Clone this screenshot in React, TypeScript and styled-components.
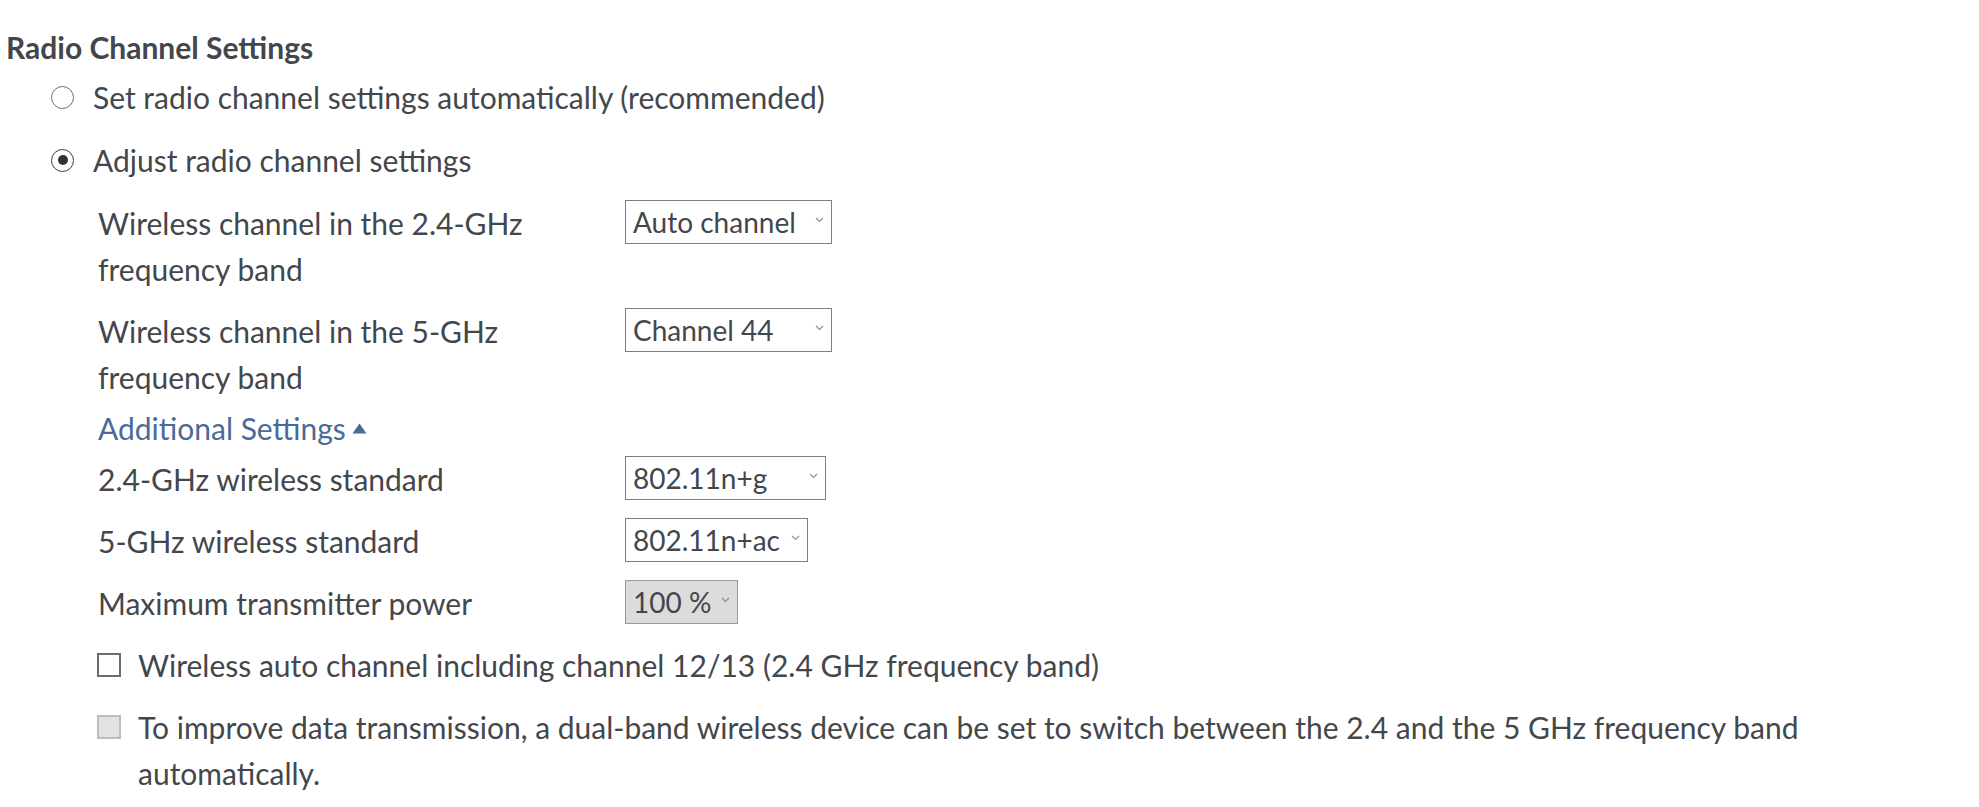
import React from 'react';
import styled, { createGlobalStyle } from 'styled-components';

const GlobalStyle = createGlobalStyle`
  html, body {
    margin: 0;
    padding: 0;
    background: #ffffff;
  }
  body {
    font-family: 'Lato', 'Open Sans', sans-serif;
    color: #43474c;
  }
`;

interface ISelectProps {
  value: string;
  width: number;
  disabled?: boolean;
}

const Select: React.FC<ISelectProps> = ({ value, width, disabled }) => {
  return (
    <SelectBox $width={width} $disabled={disabled}>
      <SelectValue>{value}</SelectValue>
      <Chevron width="9" height="6" viewBox="0 0 9 6">
        <path d="M1 1 L4.5 4.5 L8 1" fill="none" stroke="#8a8d91" strokeWidth="1.1" />
      </Chevron>
    </SelectBox>
  );
};

interface IRowProps {
  label: React.ReactNode;
  children: React.ReactNode;
}

const SettingRow: React.FC<IRowProps> = ({ label, children }) => (
  <Row>
    <RowLabel>{label}</RowLabel>
    <div>{children}</div>
  </Row>
);

const App: React.FC = () => {
  return (
    <>
      <GlobalStyle />
      <Page>
        <Heading>Radio Channel Settings</Heading>
        <RadioList>
          <RadioRow>
            <RadioCircle />
            <span>Set radio channel settings automatically (recommended)</span>
          </RadioRow>
          <RadioRow>
            <RadioCircle checked />
            <span>Adjust radio channel settings</span>
          </RadioRow>
        </RadioList>
        <Settings>
          <SettingRow label="Wireless channel in the 2.4-GHz frequency band">
            <Select value="Auto channel" width={207} />
          </SettingRow>
          <SettingRow label="Wireless channel in the 5-GHz frequency band">
            <Select value="Channel 44" width={207} />
          </SettingRow>
          <MoreLink>
            Additional Settings
            <svg width="15" height="11" viewBox="0 0 15 11">
              <path d="M7.5 0.5 L14.5 10.5 L0.5 10.5 Z" fill="#4a6a9a" />
            </svg>
          </MoreLink>
          <SettingRow label="2.4-GHz wireless standard">
            <Select value="802.11n+g" width={201} />
          </SettingRow>
          <SettingRow label="5-GHz wireless standard">
            <Select value="802.11n+ac" width={183} />
          </SettingRow>
          <SettingRow label="Maximum transmitter power">
            <Select value="100 %" width={113} disabled />
          </SettingRow>
          <CheckRow>
            <CheckBox />
            <CheckText>Wireless auto channel including channel 12/13 (2.4 GHz frequency band)</CheckText>
          </CheckRow>
          <CheckRow>
            <CheckBox disabled />
            <CheckText>
              To improve data transmission, a dual-band wireless device can be set to switch between the 2.4 and the 5 GHz
              frequency band automatically.
            </CheckText>
          </CheckRow>
        </Settings>
      </Page>
    </>
  );
};

export default App;

const Page = styled.div`
  padding: 24px 0 0 6px;
  font-size: 30px;
  line-height: 46px;
`;

const Heading = styled.div`
  font-weight: 700;
  margin-bottom: 4px;
`;

const RadioList = styled.div`
  display: flex;
  flex-direction: column;
  gap: 17px;
  padding-left: 45px;
`;

const RadioRow = styled.label`
  display: flex;
  align-items: center;
  gap: 19px;
`;

const RadioCircle = styled.span<{ checked?: boolean }>`
  box-sizing: border-box;
  width: 23px;
  height: 23px;
  border-radius: 50%;
  border: 1.6px solid ${({ checked }) => (checked ? '#3a3d41' : '#6a6d71')};
  display: flex;
  align-items: center;
  justify-content: center;
  flex-shrink: 0;

  &::after {
    content: '';
    display: ${({ checked }) => (checked ? 'block' : 'none')};
    width: 10px;
    height: 10px;
    border-radius: 50%;
    background: #2e3135;
  }
`;

const Settings = styled.div`
  display: flex;
  flex-direction: column;
  gap: 16px;
  padding: 17px 0 0 92px;
`;

const Row = styled.div`
  display: grid;
  grid-template-columns: 527px auto;
  align-items: start;
`;

const RowLabel = styled.div`
  max-width: 450px;
`;

const SelectBox = styled.div<{ $width: number; $disabled?: boolean }>`
  box-sizing: border-box;
  width: ${({ $width }) => $width}px;
  height: 44px;
  border: 1px solid ${({ $disabled }) => ($disabled ? '#9a9a9a' : '#7d7f82')};
  background: ${({ $disabled }) => ($disabled ? '#dcdcdc' : '#ffffff')};
  display: flex;
  align-items: center;
  justify-content: space-between;
  padding: 0 7px 0 7px;
  font-size: 28px;
  line-height: 42px;
`;

const SelectValue = styled.span`
  white-space: nowrap;
`;

const Chevron = styled.svg`
  flex-shrink: 0;
  margin-left: 6px;
  margin-bottom: 4px;
`;

const MoreLink = styled.div`
  color: #4a6a9a;
  line-height: 24px;
  display: flex;
  align-items: center;
  gap: 6px;
`;

const CheckRow = styled.label`
  display: flex;
  align-items: flex-start;
  gap: 17px;
  margin-left: -1px;
`;

const CheckBox = styled.span<{ disabled?: boolean }>`
  box-sizing: border-box;
  width: 24px;
  height: 24px;
  margin-top: 11px;
  flex-shrink: 0;
  border: 2px solid ${({ disabled }) => (disabled ? '#bdbdbd' : '#6a6d71')};
  background: ${({ disabled }) => (disabled ? '#e2e2e2' : '#ffffff')};
`;

const CheckText = styled.div`
  max-width: 1700px;
`;
